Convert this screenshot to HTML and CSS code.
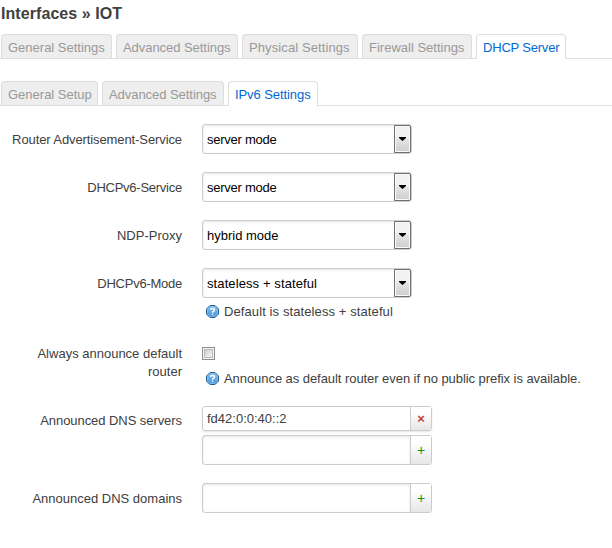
FILE: index.html
```
<!DOCTYPE html>
<html lang="en">
<head>
<meta charset="utf-8">
<title>Interfaces - IOT</title>
<link rel="stylesheet" href="styles.css">
</head>
<body>
<svg width="0" height="0" class="defs" aria-hidden="true">
  <defs>
    <linearGradient id="helpfill" x1="0" y1="0" x2="0" y2="1">
      <stop offset="0" stop-color="#8cc4ef"/><stop offset="1" stop-color="#3f93da"/>
    </linearGradient>
    <symbol id="help" viewBox="0 0 13 13">
      <path d="M4 .5h5L12.5 4v5L9 12.5H4L.5 9V4z" fill="url(#helpfill)" stroke="#285f91"/>
      <path d="M4.3 1.5h4.4l2.8 2.8v4.4l-2.8 2.8H4.3L1.5 8.7V4.3z" fill="none" stroke="#8bc1eb" stroke-width=".7"/>
      <path d="M4.5 4.8Q4.7 3.5 6.4 3.5Q8.5 3.5 8.5 5.1Q8.5 6 7.3 6.5Q6.5 6.8 6.5 7.7M6.5 8.7v1.3" fill="none" stroke="#fff" stroke-width="1.4"/>
    </symbol>
  </defs>
</svg>
<h2>Interfaces » IOT</h2>
<ul class="tabs main">
  <li class="t1"><span>General Settings</span></li>
  <li class="t2"><span>Advanced Settings</span></li>
  <li class="t3"><span>Physical Settings</span></li>
  <li class="t4"><span>Firewall Settings</span></li>
  <li class="t5 active"><span>DHCP Server</span></li>
</ul>
<ul class="tabs sub">
  <li class="t6"><span>General Setup</span></li>
  <li class="t2"><span>Advanced Settings</span></li>
  <li class="t7 active"><span>IPv6 Settings</span></li>
</ul>
<form>
  <div class="row"><label class="snug">Router Advertisement-Service</label><div class="select"><span class="tight">server mode</span><i></i></div></div>
  <div class="row"><label class="tight">DHCPv6-Service</label><div class="select"><span class="tight">server mode</span><i></i></div></div>
  <div class="row"><label>NDP-Proxy</label><div class="select"><span>hybrid mode</span><i></i></div></div>
  <div class="row mode"><label class="tight">DHCPv6-Mode</label>
    <div><div class="select"><span class="loose">stateless + stateful</span><i></i></div>
    <p class="hint"><svg><use href="#help"/></svg><span class="loose">Default is stateless + stateful</span></p></div></div>
  <div class="row announce"><label>Always announce default<br>router</label>
    <div><div class="check"></div>
    <p class="hint"><svg><use href="#help"/></svg><span class="long">Announce as default router even if no public prefix is available.</span></p></div></div>
  <div class="row servers"><label class="long">Announced DNS servers</label>
    <div><div class="entry filled"><span>fd42:0:0:40::2</span><b class="remove">×</b></div>
    <div class="entry"><span></span><b>+</b></div></div></div>
  <div class="row"><label>Announced DNS domains</label><div class="entry"><span></span><b>+</b></div></div>
</form>
</body>
</html>
```
FILE: styles.css
```
* { box-sizing: border-box; }
body {
  margin: 0;
  background: #fff;
  color: #404040;
  font: 13px/18px "Liberation Sans", Arial, sans-serif;
  overflow: hidden;
}
.defs { display: block; }
h2 { margin: 0; padding: 4px 0 0 1px; height: 34px; font-size: 16px; line-height: 20px; letter-spacing: .07px; }
.tabs {
  display: flex;
  gap: 4px;
  height: 25px;
  margin: 0;
  padding: 0 0 0 1px;
  list-style: none;
  border-bottom: 1px solid #ddd;
  white-space: nowrap;
}
.sub { margin-top: 22px; }
.tabs li {
  height: 24px;
  padding: 4px 0 0 6px;
  border: 1px solid #ddd;
  border-bottom: 0;
  border-radius: 4px 4px 0 0;
  background: #eee;
  color: #999;
}
.tabs .active { height: 25px; background: #fff; color: #0069d6; }
.t1 { width: 111px; }
.t2 { width: 122px; letter-spacing: -.05px; }
.t3 { width: 116px; letter-spacing: .1px; }
.t4 { width: 110px; }
.t5 { width: 90px; letter-spacing: -.2px; }
.t6 { width: 97px; }
.t7 { width: 90px; letter-spacing: -.08px; }
form { padding-top: 18px; }
.row { display: flex; align-items: flex-start; height: 48px; }
.row label { width: 182px; margin-right: 20px; padding-top: 7px; text-align: right; flex: none; white-space: nowrap; }
.snug { letter-spacing: -.1px; }
.tight { letter-spacing: -.25px; }
.loose { letter-spacing: .1px; }
.long { letter-spacing: -.06px; }
.mode { height: 72px; }
.announce { height: 66px; }
.announce label { padding-top: 5px; }
.servers { height: 77px; }
.servers label { padding-top: 6px; }
.select {
  display: flex;
  justify-content: space-between;
  width: 210px;
  height: 30px;
  border: 1px solid #ccc;
  border-radius: 3px;
  box-shadow: inset 0 1px 3px rgba(0,0,0,.1);
  color: #000;
}
.select span { padding: 6px 0 0 4px; }
.select i {
  display: grid;
  place-items: center;
  width: 17px;
  border: 1px solid #707070;
  border-radius: 0 2px 2px 0;
  background: linear-gradient(#f2f2f2 0 45%, #e4e4e4 50%, #cfcfcf);
  box-shadow: inset 0 0 0 1px #fafafa;
}
.select i::before { content: ""; width: 7px; height: 4px; background: #000; clip-path: polygon(0 0, 100% 0, 100% 25%, 50% 100%, 0 25%); }
.hint { display: flex; align-items: flex-start; gap: 5px; height: 18px; margin: 5px 0 0 4px; white-space: nowrap; }
.hint svg { width: 13px; height: 13px; margin-top: 2px; flex: none; }
.check {
  width: 13px;
  height: 13px;
  margin-top: 7px;
  border: 1px solid #8e8f8f;
  background: linear-gradient(135deg, #cbcfd5, #f6f6f6) content-box;
  padding: 2px;
  box-shadow: inset 0 0 0 1px #f4f4f4, inset 0 0 0 2px #b8bcc2;
}
.announce .hint { margin-top: 10px; }
.entry {
  display: flex;
  width: 230px;
  height: 30px;
  border: 1px solid #ccc;
  border-radius: 3px;
  margin-bottom: 4px;
}
.entry span { flex: 1; padding: 6px 0 0 4px; box-shadow: inset 0 1px 3px rgba(0,0,0,.1); }
.entry b {
  width: 21px;
  border-left: 1px solid #ccc;
  background: linear-gradient(#fff 25%, #e6e6e6);
  color: #0a9a1c;
  font-size: 14px;
  line-height: 28px;
  text-align: center;
  font-weight: normal;
}
.filled { height: 25px; box-shadow: 0 1px 2px rgba(0,0,0,.1); }
.filled span { padding-top: 3px; box-shadow: none; }
.entry .remove { color: #c43c35; font-size: 13px; font-weight: bold; line-height: 23px; }
```
